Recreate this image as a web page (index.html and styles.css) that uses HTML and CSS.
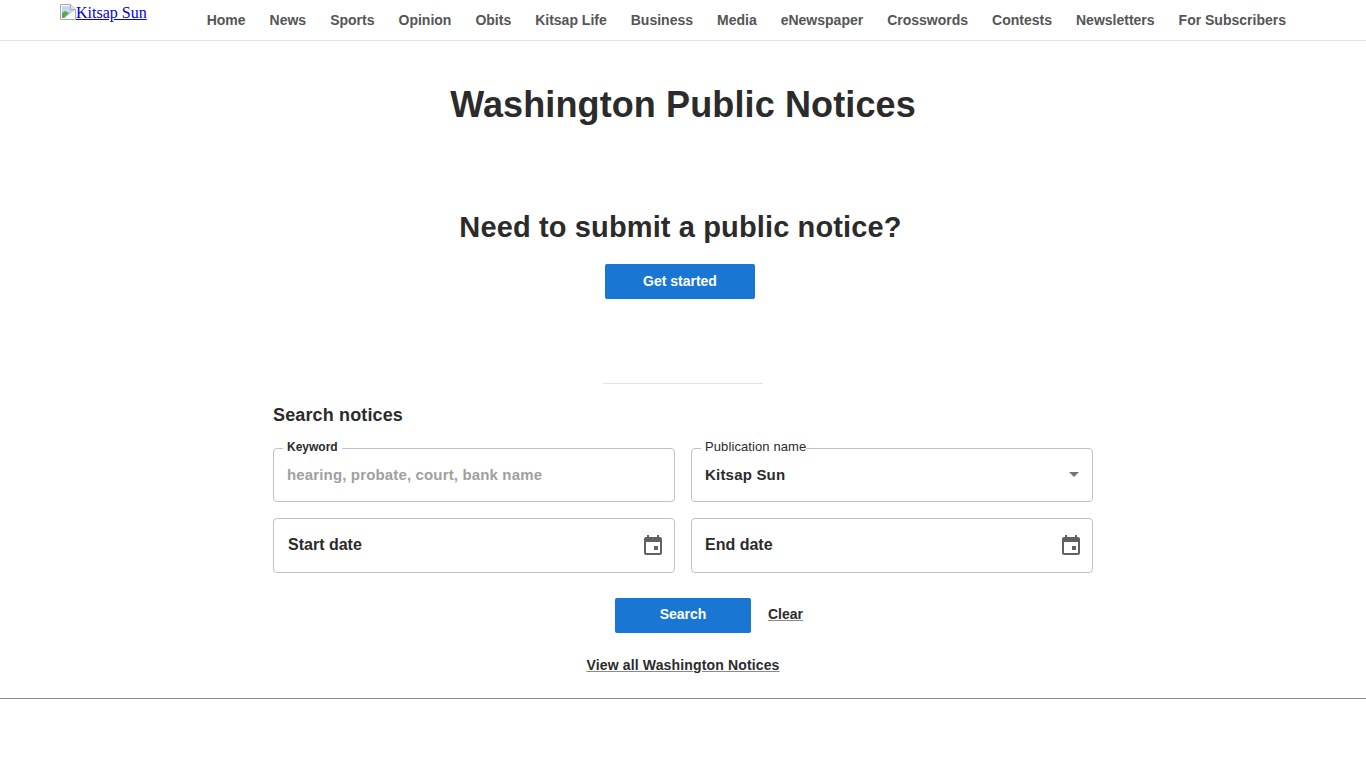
FILE: index.html
```html
<!DOCTYPE html>
<html lang="en">

<head>
    <meta charset="UTF-8">
    <title>Washington Public Notices</title>
    <link rel="stylesheet" href="styles.css">
</head>

<body>
    <header class="topbar">
        <a class="logo" href="#">
            <svg class="broken_img" width="16" height="16" viewBox="0 0 16 16">
                <path d="M.5.5h10l5 5v10H.5z" fill="#fff" stroke="#a8a8a8" />
                <path d="M10.5.5v5h5" fill="#e8e8e8" stroke="#a8a8a8" />
                <path d="M2 2h8v4h4v1L5 14H2z" fill="#c5d6f0" />
                <path d="M2 14V9l3-2 4 2-5 5z" fill="#5da64b" />
            </svg>Kitsap Sun</a>
        <nav class="mainnav">
            <a href="#">Home</a>
            <a href="#">News</a>
            <a href="#">Sports</a>
            <a href="#">Opinion</a>
            <a href="#">Obits</a>
            <a href="#">Kitsap Life</a>
            <a href="#">Business</a>
            <a href="#">Media</a>
            <a href="#">eNewspaper</a>
            <a href="#">Crosswords</a>
            <a href="#">Contests</a>
            <a href="#">Newsletters</a>
            <a href="#">For Subscribers</a>
        </nav>
    </header>

    <main class="content">
        <h1 class="page_title">Washington Public Notices</h1>

        <section class="submit">
            <h2 class="submit_title">Need to submit a public notice?</h2>
            <a class="btn btn_start" href="#">Get started</a>
        </section>

        <hr class="divider">

        <section class="search">
            <h3 class="search_title">Search notices</h3>
            <form class="fields">
                <div class="field">
                    <span class="field_label">Keyword</span>
                    <span class="placeholder">hearing, probate, court, bank name</span>
                </div>
                <div class="field">
                    <span class="field_label pub_label">Publication name</span>
                    <span class="value">Kitsap Sun</span>
                    <span class="caret"></span>
                </div>
                <div class="field date">
                    <span class="value start">Start date</span>
                    <svg class="cal_icon" width="24" height="24" viewBox="0 0 24 24">
                        <path fill="#616161" d="M19 3h-1V1h-2v2H8V1H6v2H5c-1.11 0-1.99.9-1.99 2L3 19c0 1.1.89 2 2 2h14c1.1 0 2-.9 2-2V5c0-1.1-.9-2-2-2zm0 16H5V8h14v11zM13 12h4v4h-4z" />
                    </svg>
                </div>
                <div class="field date">
                    <span class="value">End date</span>
                    <svg class="cal_icon" width="24" height="24" viewBox="0 0 24 24">
                        <path fill="#616161" d="M19 3h-1V1h-2v2H8V1H6v2H5c-1.11 0-1.99.9-1.99 2L3 19c0 1.1.89 2 2 2h14c1.1 0 2-.9 2-2V5c0-1.1-.9-2-2-2zm0 16H5V8h14v11zM13 12h4v4h-4z" />
                    </svg>
                </div>
            </form>
            <div class="actions">
                <a class="btn btn_search" href="#">Search</a>
                <a class="link" href="#">Clear</a>
            </div>
            <div class="viewall">
                <a class="link" href="#">View all Washington Notices</a>
            </div>
        </section>
    </main>

    <footer class="bottomline"></footer>
</body>

</html>
```
FILE: styles.css
```css
* {
    box-sizing: border-box;
}

body {
    margin: 0;
    background-color: #fff;
    color: #2b2b2b;
    font-family: "Liberation Sans", Arial, sans-serif;
}

.topbar {
    height: 41px;
    display: flex;
    padding-left: 60px;
    border-bottom: 1px solid #e3e3e3;
}

.logo {
    font-family: "Liberation Serif", serif;
    font-size: 16px;
    line-height: 18px;
    padding-top: 4px;
    color: #00e;
}

.broken_img {
    vertical-align: -2px;
}

.mainnav {
    display: flex;
    gap: 24px;
    margin-left: 60px;
    padding-top: 12px;
}

.mainnav a {
    font-size: 14px;
    font-weight: bold;
    line-height: 16px;
    color: #555;
    text-decoration: none;
}

.content {
    display: flex;
    flex-direction: column;
    align-items: center;
    height: 658px;
    border-bottom: 1px solid #8c8c8c;
}

.page_title {
    margin: 43px 0 0;
    font-size: 36px;
    line-height: 42px;
    letter-spacing: .12px;
}

.submit {
    display: flex;
    flex-direction: column;
    align-items: center;
    margin-top: 82px;
    margin-left: -5px;
}

.submit_title {
    margin: 0;
    font-size: 29px;
    line-height: 38px;
    letter-spacing: .13px;
}

.btn {
    display: block;
    height: 35px;
    border-radius: 2px;
    background-color: #1976d2;
    color: #fff;
    font-size: 14px;
    font-weight: bold;
    line-height: 33px;
    text-align: center;
    text-decoration: none;
}

.btn_start {
    width: 150px;
    margin-top: 18px;
    margin-left: -1px;
    line-height: 35px;
}

.divider {
    width: 160px;
    height: 1px;
    margin: 84px 0 0;
    border: none;
    background-color: #e3e3e3;
}

.search {
    width: 820px;
    margin-top: 21px;
}

.search_title {
    margin: 0;
    font-size: 18px;
    line-height: 21px;
    letter-spacing: .14px;
}

.fields {
    display: grid;
    grid-template-columns: 402px 402px;
    gap: 16px;
    margin-top: 22px;
}

.field {
    position: relative;
    display: flex;
    align-items: center;
    justify-content: space-between;
    height: 54px;
    padding: 0 13px 2px 13px;
    border: 1px solid #c2c2c2;
    border-radius: 4px;
}

.date {
    height: 55px;
    padding: 0 9px 0 13px;
}

.field_label {
    position: absolute;
    top: -10px;
    left: 9px;
    padding: 0 4px;
    background-color: #fff;
    font-size: 12px;
    font-weight: bold;
    line-height: 16px;
}

.pub_label {
    padding-right: 0;
    font-weight: normal;
    font-size: 13px;
    letter-spacing: .1px;
}

.placeholder {
    color: #a0a0a0;
    font-size: 15px;
    font-weight: bold;
    letter-spacing: .15px;
}

.value {
    font-size: 15px;
    font-weight: bold;
    letter-spacing: .2px;
}

.date .value {
    font-size: 16px;
    letter-spacing: 0;
    margin-top: -2px;
}

.start {
    margin-left: 1px;
}

.caret {
    width: 0;
    height: 0;
    border-left: 5px solid transparent;
    border-right: 5px solid transparent;
    border-top: 5px solid #757575;
}

.actions {
    display: flex;
    align-items: center;
    margin-top: 25px;
    padding-left: 342px;
}

.btn_search {
    width: 136px;
}

.actions .link {
    margin-left: 17px;
    margin-bottom: 4px;
}

.link {
    color: #2b2b2b;
    font-size: 14px;
    font-weight: bold;
    text-decoration: underline;
    text-decoration-color: #8a8a8a;
}

.viewall .link {
    letter-spacing: .15px;
}

.viewall {
    margin-top: 23px;
    text-align: center;
}
```
